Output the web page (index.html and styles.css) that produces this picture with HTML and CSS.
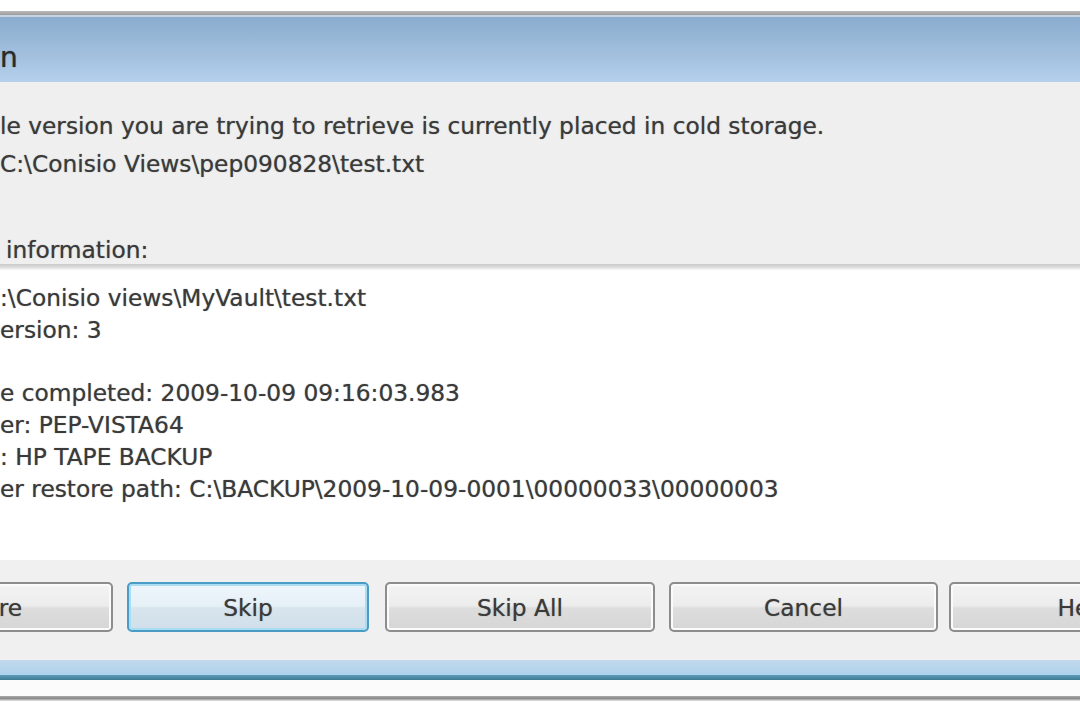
FILE: index.html
```html
<!DOCTYPE html>
<html lang="en">
<head>
<meta charset="utf-8">
<title>Cold Storage</title>
<link rel="stylesheet" href="styles.css">
</head>
<body>
<div class="page">
  <div class="top-gap"></div>
  <div class="dialog">
    <div class="frame-top"></div>
    <div class="titlebar"><span class="title">n</span></div>
    <div class="message">
      <div class="msg-line">le version you are trying to retrieve is currently placed in cold storage.</div>
      <div class="msg-line">C:\Conisio Views\pep090828\test.txt</div>
      <div class="info-label">information:</div>
    </div>
    <div class="sep"></div>
    <div class="list">
      <div class="row">:\Conisio views\MyVault\test.txt</div>
      <div class="row">ersion: 3</div>
      <div class="row">&nbsp;</div>
      <div class="row">e completed: 2009-10-09 09:16:03.983</div>
      <div class="row">er: PEP-VISTA64</div>
      <div class="row">: HP TAPE BACKUP</div>
      <div class="row">er restore path: C:\BACKUP\2009-10-09-0001\00000033\00000003</div>
    </div>
    <div class="buttons">
      <button class="btn btn-first">Restore</button>
      <button class="btn btn-default btn-skip">Skip</button>
      <button class="btn btn-skipall">Skip All</button>
      <button class="btn btn-cancel">Cancel</button>
      <button class="btn btn-help">Help</button>
    </div>
    <div class="frame-bottom"></div>
    <div class="frame-edge"></div>
  </div>
  <div class="bottom-gap"></div>
  <div class="shadow"></div>
</div>
</body>
</html>
```
FILE: styles.css
```css
html, body {
  margin: 0;
  padding: 0;
  background: #ffffff;
  overflow: hidden;
}

body {
  width: 1080px;
  height: 720px;
  font-family: "DejaVu Sans", "Open Sans", sans-serif;
  color: #3a3a3a;
}

.page {
  display: flex;
  flex-direction: column;
  width: 1080px;
  height: 720px;
  overflow: hidden;
}

.top-gap {
  height: 11px;
  background: #ffffff;
}

.dialog {
  display: flex;
  flex-direction: column;
}

.frame-top {
  height: 4px;
  background: linear-gradient(#b9b9b9, #9d9d9d);
  border-bottom: 2px solid #c6d3e0;
}

.titlebar {
  height: 65px;
  background: linear-gradient(#8aacce 0%, #9fbddc 50%, #b4d0ec 100%);
  display: flex;
  align-items: center;
}

.title {
  font-size: 28px;
  line-height: 1;
  color: #2b2b2b;
  margin-top: 16px;
  text-shadow: 0 0 1px rgba(30, 30, 30, 0.7);
}

.message {
  height: 182px;
  box-sizing: border-box;
  background: #efefef;
  padding-top: 25px;
  font-size: 23.3px;
  text-shadow: 0 0 1px rgba(40, 40, 40, 0.55);
}

.msg-line {
  line-height: 38px;
  white-space: nowrap;
}

.info-label {
  line-height: 26px;
  margin-top: 54px;
  padding-left: 6px;
  white-space: nowrap;
}

.sep {
  height: 6px;
  background: linear-gradient(#cacaca, #dadada 50%, #f8f8f8);
}

.list {
  height: 290px;
  box-sizing: border-box;
  background: #ffffff;
  padding-top: 12px;
  font-size: 23.3px;
  text-shadow: 0 0 1px rgba(40, 40, 40, 0.55);
}

.row {
  line-height: 31.8px;
  white-space: nowrap;
}

.buttons {
  height: 100px;
  box-sizing: border-box;
  background: #f0f0f0;
  padding-top: 22px;
  display: flex;
  gap: 14px;
  margin-left: -157px;
  width: 1400px;
}

.btn {
  flex: none;
  height: 50px;
  box-sizing: border-box;
  border: 2px solid #8d8d8d;
  border-radius: 5px;
  background: linear-gradient(#f4f4f4 0%, #ececec 48%, #dddddd 52%, #d6d6d6 100%);
  box-shadow: inset 0 0 0 2px #fbfbfb;
  font-family: inherit;
  font-size: 23.3px;
  color: #3a3a3a;
  text-shadow: 0 0 1px rgba(40, 40, 40, 0.55);
  padding: 0;
}

.btn-first { width: 270px; }
.btn-skip { width: 242px; }
.btn-skipall { width: 270px; margin-left: 2px; }
.btn-cancel { width: 269px; }
.btn-help { width: 270px; margin-left: -3px; }

.btn-default {
  border-color: #4a9cc6;
  background: linear-gradient(#eef6fb 0%, #e6f0f7 48%, #d8e5ee 52%, #d0dfea 100%);
  box-shadow: inset 0 0 0 2px #aadcf2;
}

.frame-bottom {
  height: 15px;
  background: linear-gradient(#c2d9ed, #add2ec);
}

.frame-edge {
  height: 5px;
  background: linear-gradient(#5d9db8, #3f7a92);
}

.bottom-gap {
  height: 16px;
  background: #fbfbfb;
}

.shadow {
  height: 5px;
  background: linear-gradient(#a8a8a8, #8c8c8c 50%, #e6e6e6);
}
```
